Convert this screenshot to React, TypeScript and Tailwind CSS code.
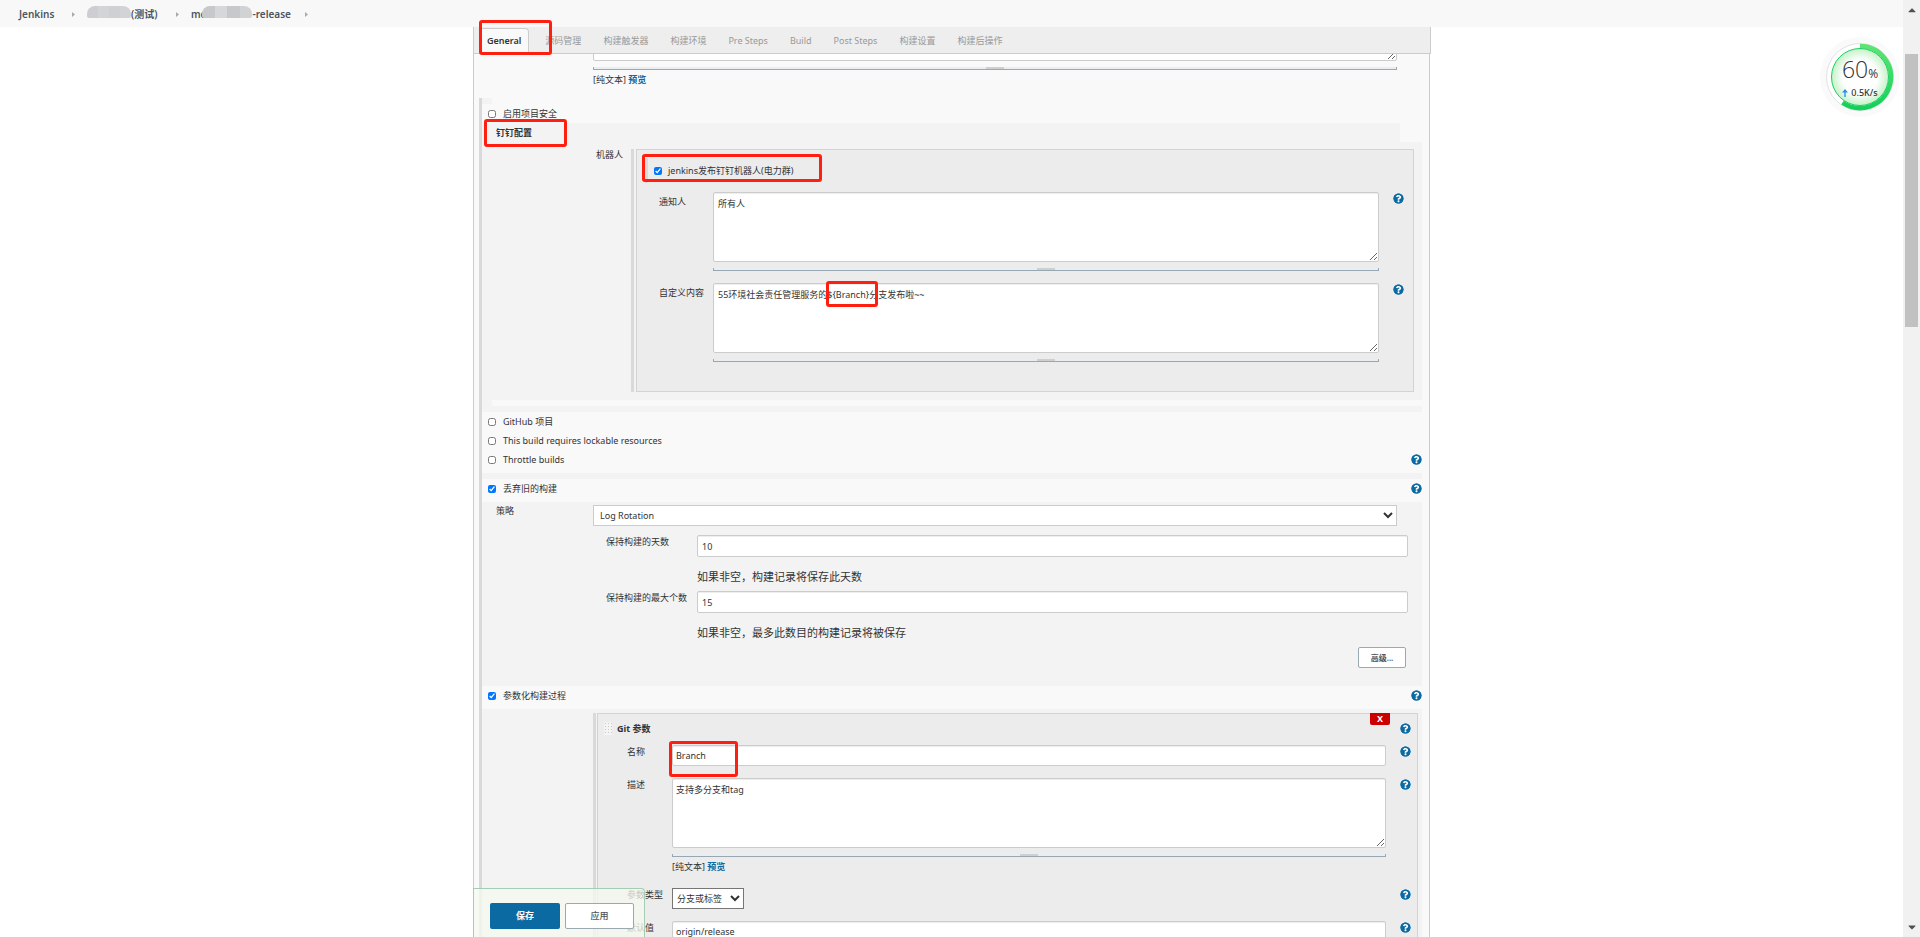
import type { ReactNode } from "react";
import { FaCaretDown, FaCaretUp, FaQuestionCircle } from "react-icons/fa";

const tabs = ["源码管理", "构建触发器", "构建环境", "Pre Steps", "Build", "Post Steps", "构建设置", "构建后操作"];

const field = "border border-[#ccc] bg-white rounded-xs shadow-[inset_0_1px_1px_rgba(0,0,0,0.075)]";

export default function App() {
  return (
    <div className="flex h-screen overflow-hidden bg-white font-['Noto_Sans','Noto_Sans_CJK_SC',sans-serif] text-[9px] leading-3 text-[#333]">
      <div className="relative flex min-w-0 flex-1 flex-col">
        <Breadcrumbs />
        <main className="relative mx-auto flex min-h-0 w-full max-w-[957px] flex-1 flex-col border-x border-[#ccc] bg-[#f9f9f9]">
          <TabBar />
          <form className="min-h-0 flex-1 overflow-hidden">
            <div className="h-11 pr-8 pl-[119px]">
              <div className="flex h-[7px] items-end overflow-hidden">
                <textarea aria-label="描述" className={`${field} h-[70px] w-full shrink-0 resize-y`} />
              </div>
              <ResizeBar />
              <PreviewLine />
            </div>
            <div className="mr-[7px] ml-[5px] border-l-[3px] border-[#d9d9d9]">
              <div className="h-1.5 w-2.5 bg-[#f3f3f3]" />
              <CheckRow id="security" label="启用项目安全" />
              <DingTalk />
              <div className="pb-1">
                <CheckRow id="github" label="GitHub 项目" />
                <CheckRow id="lockable" label="This build requires lockable resources" />
                <CheckRow id="throttle" label="Throttle builds" help />
              </div>
              <div className="h-1.5 bg-[#f3f3f3]" />
              <div className="pb-1">
                <CheckRow id="discard" label="丢弃旧的构建" checked help />
              </div>
              <DiscardBuilds />
              <div className="pb-1">
                <CheckRow id="parameterized" label="参数化构建过程" checked help />
              </div>
              <GitParameter />
            </div>
          </form>
          <div className="absolute bottom-0 -left-px flex h-[49px] gap-[5px] rounded-tr border border-b-0 border-[#a5ccb5] bg-[#f5f8f0]/75 pt-3.5 pr-2.5 pl-4">
            <button className="h-[26px] w-[70px] rounded-xs bg-[#0b6aa2] font-bold text-white">保存</button>
            <button className="h-[26px] w-[69px] rounded-xs border border-[#9aa8b0] bg-white font-medium text-[#4d545d]">应用</button>
          </div>
        </main>
        <SpeedBall />
      </div>
      <div className="flex w-[17px] flex-col items-center justify-between bg-[#f1f1f1] text-[#505050]">
        <FaCaretUp className="mt-1 h-3 w-3" />
        <div className="mt-[38px] h-[273px] w-[13px] bg-[#c1c1c1]" />
        <div className="flex-1" />
        <FaCaretDown className="mb-1 h-3 w-3" />
      </div>
    </div>
  );
}

function Breadcrumbs() {
  return (
    <nav className="flex h-[27px] shrink-0 items-center bg-[#f8f8f8] pl-[19px] text-[10px] font-semibold text-[#4d545d]">
      <a href="#jenkins" className="w-[53px]">Jenkins</a>
      <Chevron />
      <a href="#folder" className="ml-3 flex w-[89px] items-center">
        <Mosaic className="w-11" tones={["bg-[#cdced1]", "bg-[#d3d4d6]", "bg-[#cfd0d3]", "bg-[#d2d3d5]"]} />
        <span>(测试)</span>
      </a>
      <Chevron />
      <a href="#job" className="ml-3 flex w-[114px] items-center">
        <span>me</span>
        <Mosaic className="-ml-1 w-[50px]" tones={["bg-[#c6c8cb]", "bg-[#d6d7d9]", "bg-[#c7c8cc]", "bg-[#d1d2d4]"]} />
        <span>-release</span>
      </a>
      <Chevron />
    </nav>
  );
}

function Chevron() {
  return (
    <svg width="3" height="5" viewBox="0 0 3 5" fill="#aaa" className="mt-px shrink-0">
      <path d="M0 0 3 2.5 0 5z" />
    </svg>
  );
}

function Mosaic({ tones, className }: { tones: string[]; className: string }) {
  return (
    <span className={`relative mb-1 flex h-3 shrink-0 overflow-hidden rounded-t-lg rounded-b-xs ${className}`}>
      {tones.map((tone) => (
        <span key={tone} className={`flex-1 ${tone}`} />
      ))}
    </span>
  );
}

function TabBar() {
  return (
    <div className="relative -mr-0.5 flex h-[27px] shrink-0 gap-[22px] border-r border-b border-[#ccc] bg-[#eee] pl-1.5">
      <a href="#general" className="mt-px -mr-1.5 flex items-center rounded-tr border-t border-r border-[#ccc] bg-[#f9f9f9] px-[7px] font-semibold text-[#333]">
        General
      </a>
      {tabs.map((tab) => (
        <a key={tab} href={`#${tab}`} className="flex items-center pt-px text-[#999]">
          {tab}
        </a>
      ))}
      <Mark className="-top-[7px] left-[5px] h-[35px] w-[73px]" />
    </div>
  );
}

function DingTalk() {
  return (
    <section className="relative">
      <h2 className="mr-[22px] flex h-[19px] items-center bg-[#f3f3f3] pl-3.5 font-bold">钉钉配置</h2>
      <Mark className="-top-1 left-0.5 h-7 w-[83px]" />
      <div className="flex bg-[#f3f3f3] pt-[7px] pr-2 pb-2">
        <div className="w-[149px] shrink-0 pl-[114px]">机器人</div>
        <div className="flex-1 border-l-[3px] border-[#d9d9d9] pl-0.5">
          <div className="border border-[#d3d3d3] bg-[#ececec] pt-2 pb-[17px]">
            <div className="relative mb-[9px] ml-2 flex h-[25px] items-center border-l-[3px] border-[#d9d9d9] pl-1.5">
              <input id="robot" type="checkbox" defaultChecked className="size-2" />
              <label htmlFor="robot" className="pl-1.5">jenkins发布钉钉机器人(电力群)</label>
              <Mark className="-top-1 -left-1.5 h-7 w-[180px]" />
            </div>
            <Row id="notify" label="通知人" labelClass="w-[76px] pl-[22px] pt-1" endClass="w-[34px]">
              <textarea id="notify" className={`${field} block h-[70px] w-full resize-y px-1 py-[5px]`} defaultValue="所有人" />
              <ResizeBar />
            </Row>
            <div className="h-3" />
            <Row id="content" label="自定义内容" labelClass="w-[76px] pl-[22px] pt-1" endClass="w-[34px]">
              <textarea id="content" className={`${field} block h-[70px] w-full resize-y px-1 py-[5px]`} defaultValue="55环境社会责任管理服务的${Branch}分支发布啦~~" />
              <ResizeBar />
              <Mark className="-top-0.5 left-[113px] h-[26px] w-[52px]" />
            </Row>
            <div className="h-3" />
          </div>
        </div>
      </div>
      <div className="bg-[#f3f3f3] pb-1.5 pl-2.5">
        <div className="h-1.5 bg-[#f9f9f9]" />
      </div>
    </section>
  );
}

function DiscardBuilds() {
  return (
    <section className="bg-[#f3f3f3] pt-[3px] pb-[18px]">
      <div className="mb-[9px] flex pr-[25px]">
        <label htmlFor="strategy" className="w-[111px] shrink-0 pl-3.5">策略</label>
        <select id="strategy" className="h-[21px] flex-1 border border-[#ccc] bg-white px-0.5">
          <option>Log Rotation</option>
        </select>
      </div>
      <KeepRow id="days" label="保持构建的天数" value="10" note="如果非空，构建记录将保存此天数" />
      <KeepRow id="max" label="保持构建的最大个数" value="15" note="如果非空，最多此数目的构建记录将被保存" />
      <div className="flex justify-end pr-4">
        <button type="button" className="h-[21px] w-12 rounded-xs border border-[#9aa8b0] bg-white text-[8px] font-semibold text-[#4d545d]">高级...</button>
      </div>
    </section>
  );
}

function KeepRow({ id, label, value, note }: { id: string; label: string; value: string; note: string }) {
  return (
    <div className="flex pr-3.5 pb-1.5">
      <label htmlFor={id} className="w-[215px] shrink-0 pt-px pl-[124px]">{label}</label>
      <div className="flex-1">
        <input id={id} type="text" defaultValue={value} className={`${field} block h-[22px] w-full px-1`} />
        <p className="pt-3 text-[11px] leading-4">{note}</p>
      </div>
    </div>
  );
}

function GitParameter() {
  const labelClass = "w-[74px] pl-[29px] pt-px";
  return (
    <section className="flex bg-[#f3f3f3] pt-1 pr-1 pl-[111px]">
      <div className="flex-1 border-l-[3px] border-[#d9d9d9] pl-px">
        <div className="relative border border-[#d3d3d3] bg-[#ececec] pb-10">
          <button type="button" aria-label="删除" className="absolute -top-px right-[27px] h-3 w-5 rounded-b-xs bg-[#c00] text-[9px] leading-3 font-bold text-white">X</button>
          <div className="flex h-[31px] items-center px-1.5 pb-0.5">
            <svg width="8" height="13" className="mr-[5px]">
              <defs>
                <pattern id="grip" width="3" height="3" patternUnits="userSpaceOnUse">
                  <rect width="3" height="3" fill="#f4f4f4" />
                  <rect x="1" y="1" width="1" height="1" fill="#c8c8c8" />
                </pattern>
              </defs>
              <rect width="8" height="13" fill="url(#grip)" />
            </svg>
            <h3 className="flex-1 font-bold">Git 参数</h3>
            <Help />
          </div>
          <Row id="name" label="名称" labelClass={labelClass} endClass="w-[31px]">
            <input id="name" type="text" defaultValue="Branch" className={`${field} block h-[21px] w-full px-[3px]`} />
            <Mark className="-top-1 -left-[3px] h-9 w-[69px]" />
          </Row>
          <div className="h-3" />
          <Row id="desc" label="描述" labelClass={labelClass} endClass="w-[31px]">
            <textarea id="desc" className={`${field} block h-[70px] w-full resize-y px-[3px] py-[5px]`} defaultValue="支持多分支和tag" />
            <ResizeBar />
            <PreviewLine />
          </Row>
          <div className="h-[15px]" />
          <Row id="type" label="参数类型" labelClass={labelClass} endClass="w-[31px]">
            <select id="type" className="block h-[21px] w-[72px] border border-[#767676] bg-white">
              <option>分支或标签</option>
            </select>
          </Row>
          <div className="h-3" />
          <Row id="default" label="默认值" labelClass={labelClass} endClass="w-[31px]">
            <input id="default" type="text" defaultValue="origin/release" className={`${field} block h-[21px] w-full px-[3px]`} />
          </Row>
        </div>
      </div>
    </section>
  );
}

function Row({ id, label, labelClass, endClass, children }: { id: string; label: string; labelClass: string; endClass: string; children: ReactNode }) {
  return (
    <div className="flex">
      <label htmlFor={id} className={`shrink-0 whitespace-nowrap ${labelClass}`}>{label}</label>
      <div className="relative min-w-0 flex-1">{children}</div>
      <div className={`shrink-0 pt-px pl-3.5 ${endClass}`}>
        <Help />
      </div>
    </div>
  );
}

function CheckRow({ id, label, checked, help }: { id: string; label: string; checked?: boolean; help?: boolean }) {
  return (
    <div className="flex h-[19px] items-center pl-1.5">
      <input id={id} type="checkbox" defaultChecked={checked} className="size-2" />
      <label htmlFor={id} className="flex-1 pl-[7px]">{label}</label>
      {help ? <Help /> : null}
    </div>
  );
}

function Help() {
  return (
    <a href="#help" aria-label="帮助" className="block text-[#0b6aa2]">
      <FaQuestionCircle className="size-[11px] rounded-full bg-white" />
    </a>
  );
}

function ResizeBar() {
  return (
    <div className="mt-1.5 flex h-[3px] justify-center border-x border-b border-[#98a7b1] bg-[#e8eef2]">
      <div className="w-[18px] bg-[#ccd0d0]" />
    </div>
  );
}

function PreviewLine() {
  return (
    <p className="mt-1">
      [纯文本] <a href="#preview" className="font-bold text-[#0b6aa2]">预览</a>
    </p>
  );
}

// red outline laid over a control
function Mark({ className }: { className: string }) {
  return <div className={`pointer-events-none absolute z-10 rounded-[3px] border-[3px] border-[#ff1f10] ${className}`} />;
}

function SpeedBall() {
  return (
    <div className="absolute top-[37px] right-[3px] flex size-20 flex-col items-center justify-center rounded-full bg-[#fafafa]">
      <svg viewBox="0 0 80 80" className="absolute inset-0">
        <defs>
          <radialGradient id="ball">
            <stop offset="0.6" stopColor="#fff" />
            <stop offset="1" stopColor="#c5f2c8" />
          </radialGradient>
          <linearGradient id="arc" x1="0" y1="0" x2="0" y2="1">
            <stop offset="0" stopColor="#5ce572" />
            <stop offset="1" stopColor="#14d05a" />
          </linearGradient>
        </defs>
        <circle cx="40" cy="40" r="33.5" fill="#fff" stroke="#e2e2e2" />
        <path d="M40 9A31 31 0 1 1 22.5 65.6" fill="none" stroke="url(#arc)" strokeWidth="4.5" />
        <circle cx="40" cy="40" r="28.5" fill="url(#ball)" stroke="#18cf62" />
      </svg>
      <p className="relative flex items-baseline font-['Open_Sans',sans-serif] text-[23px] leading-[26px] font-light text-[#333]">
        60<span className="text-[12px] font-normal">%</span>
      </p>
      <p className="relative flex items-center gap-[3px] text-[9px] leading-3 font-medium text-[#333]">
        <svg width="6" height="8" viewBox="0 0 6 8" fill="#2f8df0">
          <path d="M3 0 6 3.5H3.7V8H2.3V3.5H0z" />
        </svg>
        0.5K/s
      </p>
    </div>
  );
}
